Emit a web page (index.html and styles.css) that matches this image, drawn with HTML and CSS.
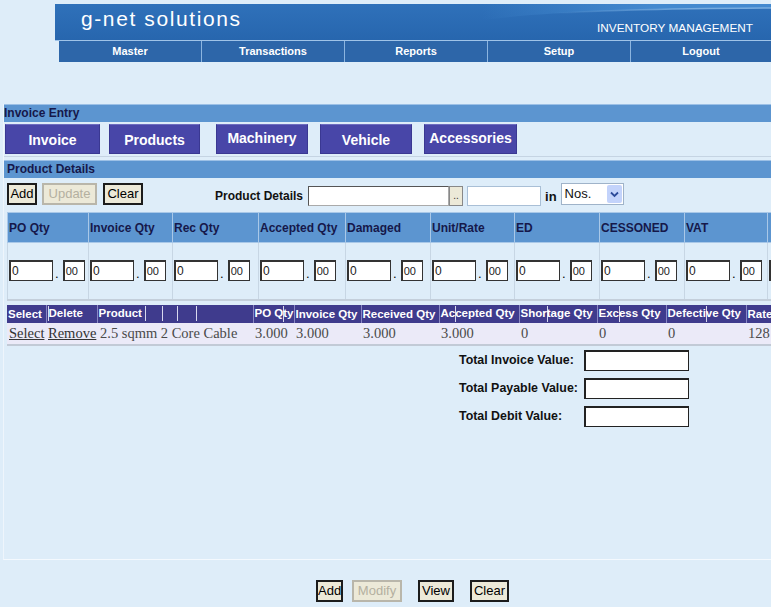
FILE: index.html
```html
<!DOCTYPE html>
<html>
<head>
<meta charset="utf-8">
<title>Invoice Entry</title>
<link rel="stylesheet" href="styles.css">
</head>
<body>
<div class="page">
  <header class="top">
    <div class="banner">
      <svg class="swoosh" width="716" height="36" viewBox="0 0 716 36" preserveAspectRatio="none">
        <defs>
          <linearGradient id="fadeIn" x1="0" y1="0" x2="1" y2="0">
            <stop offset="0.38" stop-color="#4389cf" stop-opacity="0"/>
            <stop offset="0.75" stop-color="#4389cf" stop-opacity="1"/>
          </linearGradient>
          <linearGradient id="lineFade" x1="0" y1="0" x2="1" y2="0">
            <stop offset="0.42" stop-color="#7fb2e3" stop-opacity="0"/>
            <stop offset="0.8" stop-color="#7fb2e3" stop-opacity="0.9"/>
          </linearGradient>
        </defs>
        <path d="M340 36 C 410 12, 500 5, 716 4 L716 0 L250 0 L250 36 Z" fill="url(#fadeIn)"/>
        <path d="M340 36 C 410 12, 500 5, 716 4" fill="none" stroke="url(#lineFade)" stroke-width="1.5"/>
      </svg>
      <span class="brand">g-net solutions</span>
      <span class="tagline">INVENTORY MANAGEMENT</span>
    </div>
    <nav class="nav">
      <a class="nav-item">Master</a>
      <a class="nav-item">Transactions</a>
      <a class="nav-item">Reports</a>
      <a class="nav-item">Setup</a>
      <a class="nav-item nav-last">Logout</a>
    </nav>
  </header>

  <main class="panel">
    <div class="bar">Invoice Entry</div>
    <div class="tabs">
      <span class="tab t1">Invoice</span>
      <span class="tab t2">Products</span>
      <span class="tab t3 raised">Machinery</span>
      <span class="tab t4">Vehicle</span>
      <span class="tab t5 raised">Accessories</span>
    </div>

    <div class="bar bar-sub">Product Details</div>
    <div class="toolbar">
      <button class="btn tb-add">Add</button>
      <button class="btn btn-off tb-upd">Update</button>
      <button class="btn tb-clr">Clear</button>
      <label class="lbl pd-label">Product Details</label>
      <input class="field pd-field" type="text">
      <button class="dots">..</button>
      <input class="field qty-field" type="text">
      <span class="lbl in-lbl">in</span>
      <span class="select">Nos.<span class="arrow"><svg width="9" height="7" viewBox="0 0 9 7"><path d="M1 1.5 L4.5 5 L8 1.5" fill="none" stroke="#2c4a9a" stroke-width="1.8"/></svg></span></span>
    </div>

    <table class="qty">
      <tr class="qty-head">
        <th class="c1">PO Qty</th>
        <th class="c2">Invoice Qty</th>
        <th class="c3">Rec Qty</th>
        <th class="c4">Accepted Qty</th>
        <th class="c5">Damaged</th>
        <th class="c6">Unit/Rate</th>
        <th class="c7">ED</th>
        <th class="c8">CESSONED</th>
        <th class="c9">VAT</th>
        <th class="c10"></th>
      </tr>
      <tr class="qty-row">
        <td><span class="num"><span class="ib big">0</span>.<span class="ib small">00</span></span></td>
        <td><span class="num"><span class="ib big">0</span>.<span class="ib small">00</span></span></td>
        <td><span class="num"><span class="ib big">0</span>.<span class="ib small">00</span></span></td>
        <td><span class="num"><span class="ib big">0</span>.<span class="ib small">00</span></span></td>
        <td><span class="num"><span class="ib big">0</span>.<span class="ib small">00</span></span></td>
        <td><span class="num"><span class="ib big">0</span>.<span class="ib small">00</span></span></td>
        <td><span class="num"><span class="ib big">0</span>.<span class="ib small">00</span></span></td>
        <td><span class="num"><span class="ib big">0</span>.<span class="ib small">00</span></span></td>
        <td><span class="num"><span class="ib big">0</span>.<span class="ib small">00</span></span></td>
        <td><span class="num"><span class="ib big"></span></span></td>
      </tr>
    </table>

    <table class="grid">
      <tr class="grid-head">
        <th class="g1">Select</th>
        <th class="g2"><span class="mark"></span>Delete</th>
        <th class="g3">Product<span class="mark m1"></span><span class="mark m2"></span><span class="mark m3"></span><span class="mark m4"></span></th>
        <th class="g4">PO Q<span class="mark tight"></span>ty</th>
        <th class="g5">Invoice Qty</th>
        <th class="g6">Received Qty</th>
        <th class="g7">Ac<span class="mark tight"></span>cepted Qty</th>
        <th class="g8">Shor<span class="mark tight"></span>tage Qty</th>
        <th class="g9">Exc<span class="mark tight"></span>ess Qty</th>
        <th class="g10">Defecti<span class="mark tight"></span>ve Qty</th>
        <th class="g11">Rate</th>
      </tr>
      <tr class="grid-row">
        <td><a class="lnk">Select</a></td>
        <td><a class="lnk">Remove</a></td>
        <td class="prod">2.5 sqmm 2 Core Cable</td>
        <td>3.000</td>
        <td>3.000</td>
        <td>3.000</td>
        <td>3.000</td>
        <td>0</td>
        <td>0</td>
        <td>0</td>
        <td>128</td>
      </tr>
    </table>

    <div class="totals">
      <span class="lbl">Total Invoice Value:</span><input class="field tot" type="text">
      <span class="lbl">Total Payable Value:</span><input class="field tot" type="text">
      <span class="lbl">Total Debit Value:</span><input class="field tot" type="text">
    </div>
  </main>

  <div class="actions">
    <button class="btn">Add</button>
    <button class="btn btn-off">Modify</button>
    <button class="btn">View</button>
    <button class="btn">Clear</button>
  </div>
</div>
</body>
</html>
```

FILE: styles.css
```css
html, body {
  margin: 0;
  padding: 0;
  overflow: hidden;
}
body {
  width: 771px;
  height: 607px;
  background: #deedf9;
  font-family: "Liberation Sans", Arial, sans-serif;
}
.page {
  width: 771px;
  height: 607px;
  overflow: hidden;
}

/* header */
.top {
  margin-left: 55px;
  padding-top: 4px;
}
.banner {
  position: relative;
  height: 36px;
  background: linear-gradient(180deg, #2f71ba 0%, #2766ae 100%);
  display: flex;
  justify-content: space-between;
  align-items: flex-start;
  overflow: hidden;
  border-bottom: 1px solid #9fc3e8;
}
.swoosh {
  position: absolute;
  left: 0;
  top: 0;
}
.brand {
  position: relative;
  padding-left: 26px;
  color: #fff;
  font-size: 21px;
  line-height: 29px;
  letter-spacing: 1.6px;
}
.tagline {
  position: relative;
  margin-top: 17px;
  padding-right: 18px;
  color: #fff;
  font-size: 11.8px;
  line-height: 14px;
}
.nav {
  margin-left: 4px;
  display: flex;
  height: 21px;
  background: #2d66a9;
}
.nav-item {
  width: 142px;
  border-right: 1px solid #8cb5e0;
  color: #fff;
  font-weight: bold;
  font-size: 11px;
  line-height: 21px;
  text-align: center;
}
.nav-last {
  flex: 1;
  border-right: none;
}

/* panel */
.panel {
  margin-top: 42px;
  margin-left: 3px;
  height: 455px;
  border-left: 1px solid #eef5fc;
  border-bottom: 1px solid #f4f9fe;
}
.bar {
  height: 17px;
  background: #5c95d0;
  border-top: 1px solid #9cc0e6;
  color: #16184a;
  font-weight: bold;
  font-size: 12px;
  line-height: 17px;
  padding-left: 0;
}
.bar-sub {
  margin-top: 3px;
  padding-left: 3px;
}
.tabs {
  display: flex;
  padding: 2px 0 2px 1px;
  height: 30px;
  border-bottom: 1px solid #c5d4e3;
}
.tab {
  box-sizing: border-box;
  height: 30px;
  background: #4846a8;
  border: 1px solid #3a3892;
  border-top-color: #6d6cc0;
  color: #fff;
  font-weight: bold;
  font-size: 14px;
  display: flex;
  align-items: center;
  justify-content: center;
  padding-top: 2px;
}
.tab.raised {
  padding-top: 0;
  padding-bottom: 3px;
}
.t1 { width: 95px; }
.t2 { width: 91px; margin-left: 9px; }
.t3 { width: 92px; margin-left: 16px; }
.t4 { width: 92px; margin-left: 12px; }
.t5 { width: 93px; margin-left: 12px; }

/* buttons */
.btn {
  box-sizing: border-box;
  height: 22px;
  padding: 0;
  background: #ece9d8;
  border: 2px solid #1c1c1c;
  font-family: "Liberation Sans", Arial, sans-serif;
  font-size: 13px;
  color: #000;
  line-height: 18px;
  text-align: center;
}
.btn-off {
  color: #b4b0a0;
  border-color: #b9b6aa;
}

.toolbar {
  display: flex;
  align-items: center;
  height: 22px;
  margin-top: 5px;
  padding-left: 3px;
}
.tb-add { width: 30px; }
.tb-upd { width: 55px; margin-left: 5px; }
.tb-clr { width: 40px; margin-left: 6px; }
.lbl {
  font-weight: bold;
  font-size: 12px;
  color: #111;
}
.pd-label {
  margin-left: 72px;
  margin-top: 4px;
}
.field {
  box-sizing: border-box;
  height: 20px;
  background: #fff;
  border: 1px solid #7f9db9;
  border-color: #555 #aaa #aaa #555;
  margin: 0;
  padding: 0;
}
.pd-field {
  margin-left: 5px;
  width: 141px;
  margin-top: 3px;
}
.dots {
  box-sizing: border-box;
  width: 14px;
  height: 20px;
  margin-top: 3px;
  padding: 0;
  background: #ece9d8;
  border: 1px solid #888;
  font-size: 10px;
  line-height: 14px;
  color: #333;
}
.qty-field {
  margin-left: 4px;
  width: 74px;
  margin-top: 3px;
  border-color: #a9bfd6;
}
.in-lbl {
  margin-left: 4px;
  font-size: 13px;
  margin-top: 5px;
}
.select {
  margin-left: 4px;
  box-sizing: border-box;
  width: 63px;
  height: 22px;
  background: #fff;
  border: 1px solid #9fb3c9;
  font-size: 13px;
  padding-left: 3px;
  line-height: 20px;
  display: flex;
  justify-content: space-between;
  color: #111;
}
.arrow {
  width: 15px;
  margin: 1px;
  background: #c3d3fb;
  border-radius: 2px;
  display: flex;
  align-items: center;
  justify-content: center;
}

/* qty table */
.qty {
  margin-top: 7px;
  margin-left: 3px;
  border-collapse: collapse;
  table-layout: fixed;
  width: 790px;
}
.qty th, .qty td {
  box-sizing: border-box;
  padding: 0;
  border: 1px solid #c7d6e4;
}
.qty-head th {
  height: 30px;
  background: #5c95d0;
  border-color: #a9c8e8;
  color: #16184a;
  font-size: 12px;
  text-align: left;
  padding-left: 1px;
}
.qty-row td {
  height: 57px;
  padding-left: 1px;
  vertical-align: middle;
  border-bottom: 2px solid #c4cfdb;
}
.c1 { width: 81px; }
.c2 { width: 84px; }
.c3 { width: 86px; }
.c4 { width: 87px; }
.c5 { width: 85px; }
.c6 { width: 84px; }
.c7 { width: 85px; }
.c8 { width: 85px; }
.c9 { width: 83px; }
.c10 { width: 30px; }
.num {
  display: flex;
  align-items: flex-end;
  font-size: 13px;
}
.ib {
  box-sizing: border-box;
  height: 21px;
  background: #fff;
  border: 1px solid #333;
  border-width: 2px 1px 1px 2px;
  font-size: 12px;
  line-height: 18px;
  padding-left: 1px;
  color: #222;
}
.big { width: 44px; margin-right: 2px; }
.small { width: 22px; margin-left: 4px; font-size: 11px; }

/* grid */
.grid {
  margin-top: 4px;
  margin-left: 3px;
  border-collapse: collapse;
  table-layout: fixed;
  width: 780px;
}
.grid th, .grid td {
  box-sizing: border-box;
}
.grid-head th {
  height: 18px;
  background: #3f3b8d;
  color: #fff;
  font-size: 11.5px;
  text-align: left;
  padding: 0 0 0 1px;
  white-space: nowrap;
  overflow: hidden;
  border-right: 1px solid #8a88c4;
}
.mark {
  display: inline-block;
  width: 1px;
  height: 15px;
  background: #d8d8ee;
  vertical-align: middle;
}
.mark.tight { margin: 0 -1px 0 0; height: 16px; }
.m1 { margin-left: 3px; }
.m2 { margin-left: 16px; }
.m3 { margin-left: 14px; }
.m4 { margin-left: 18px; }
.grid-row td {
  height: 22px;
  background: #ebeaf8;
  font-family: "Liberation Serif", "Times New Roman", serif;
  font-size: 14.5px;
  color: #4a4a4a;
  padding: 0 0 0 2px;
  white-space: nowrap;
  overflow: hidden;
  border-bottom: 2px solid #c2cad6;
}
.grid-row td.prod { padding-left: 3px; }
.lnk {
  color: #333;
  text-decoration: underline;
}
.g1 { width: 39px; }
.g2 { width: 51px; }
.g3 { width: 156px; }
.g4 { width: 41px; }
.g5 { width: 67px; }
.g6 { width: 78px; }
.g7 { width: 80px; }
.g8 { width: 78px; }
.g9 { width: 69px; }
.g10 { width: 80px; }
.g11 { width: 41px; }

/* totals */
.totals {
  margin-top: 4px;
  margin-left: 455px;
  display: grid;
  grid-template-columns: 125px 105px;
  row-gap: 7px;
  align-items: center;
}
.totals .lbl {
  font-size: 12.4px;
}
.tot {
  width: 105px;
  height: 21px;
  border: 1px solid #222;
  border-width: 2px 1px 1px 2px;
}

/* actions */
.actions {
  display: flex;
  margin-top: 20px;
  padding-left: 316px;
}
.actions .btn:nth-child(1) { width: 27px; }
.actions .btn:nth-child(2) { width: 50px; margin-left: 9px; }
.actions .btn:nth-child(3) { width: 36px; margin-left: 16px; }
.actions .btn:nth-child(4) { width: 39px; margin-left: 16px; }
```
